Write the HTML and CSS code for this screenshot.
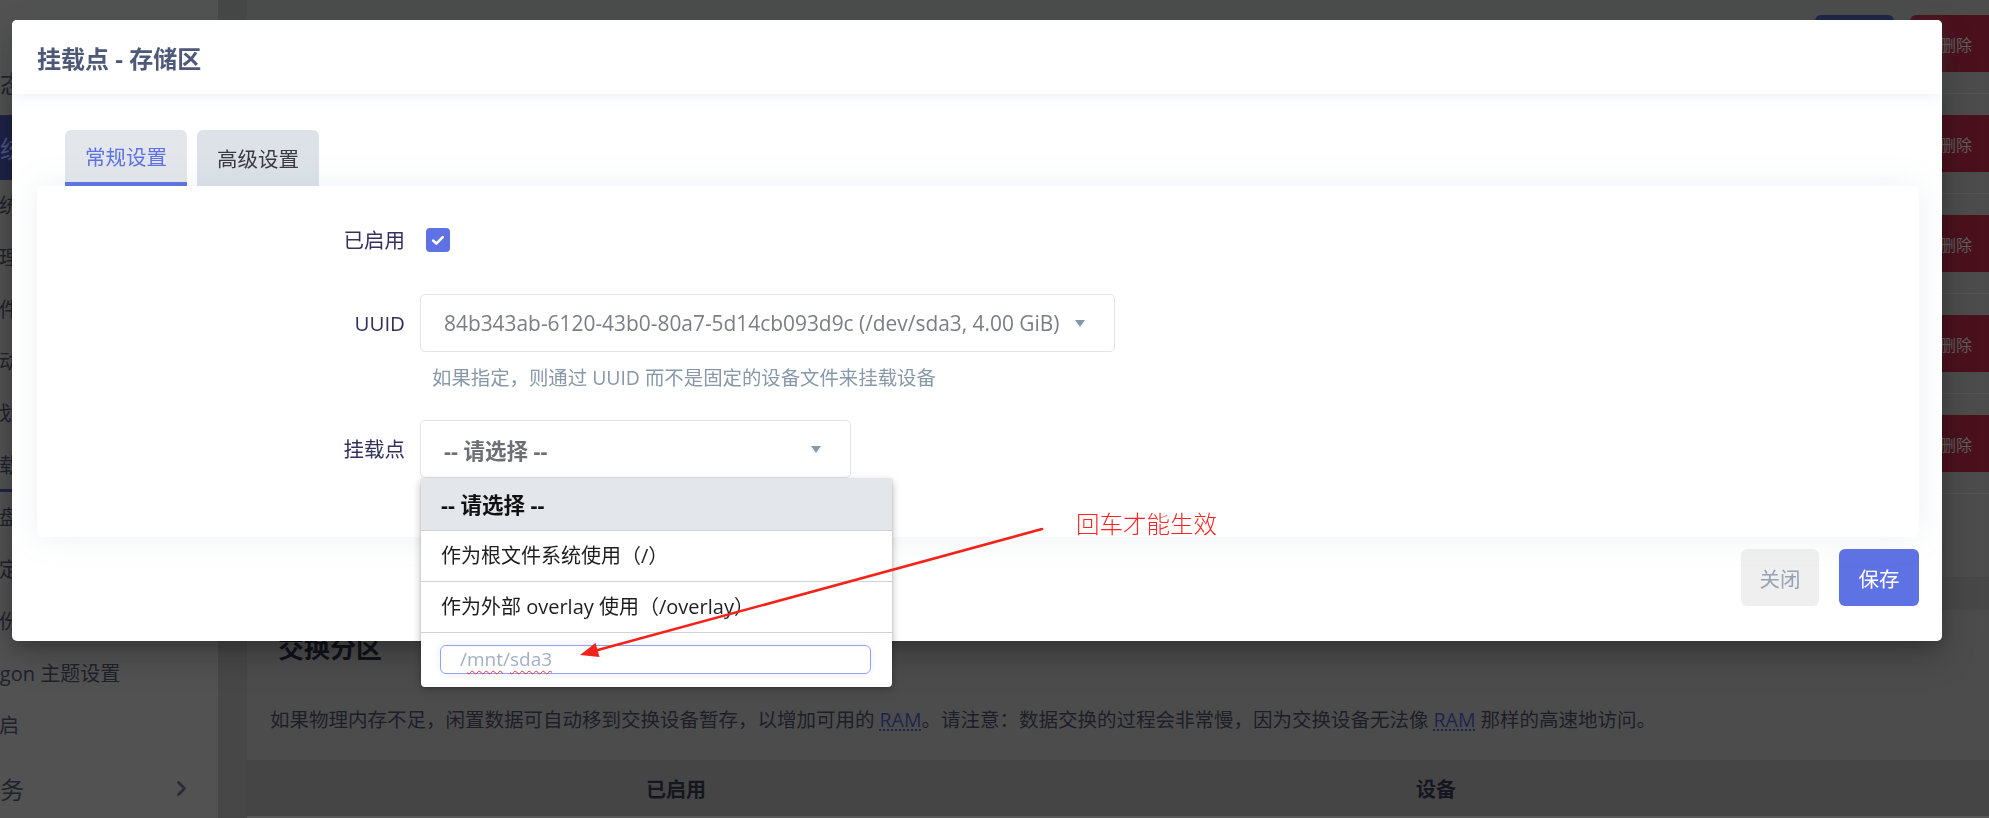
FILE: index.html
```html
<!DOCTYPE html>
<html lang="zh-CN">
<head>
<meta charset="utf-8">
<title>挂载点 - 存储区</title>
<link rel="stylesheet" href="styles.css">
</head>
<body>
<div class="page">
  <aside class="sidebar">
    <div class="menu-top"><span class="mt-text">状态</span></div>
    <div class="menu-top active"><span class="mt-text">系统</span></div>
    <ul class="submenu">
      <li>系统</li>
      <li>管理权</li>
      <li>软件包</li>
      <li>启动项</li>
      <li>计划任务</li>
      <li class="current">挂载点</li>
      <li>磁盘管理</li>
      <li>自定义命令</li>
      <li>备份/升级</li>
      <li>Argon 主题设置</li>
      <li>重启</li>
    </ul>
    <div class="menu-top has-sub"><span class="mt-text">服务</span>
      <svg class="chev" width="9" height="15" viewBox="0 0 9 15"><path d="M1.5 1.5l6 6-6 6" fill="none" stroke="#2a2b30" stroke-width="2.6" stroke-linecap="round" stroke-linejoin="round"/></svg>
    </div>
  </aside>
  <main class="main">
    <section class="bg-card table-card">
      <div class="trow"><span class="bg-btn edit">修改</span><span class="bg-btn del">删除</span></div>
      <div class="trow"><span class="bg-btn edit">修改</span><span class="bg-btn del">删除</span></div>
      <div class="trow"><span class="bg-btn edit">修改</span><span class="bg-btn del">删除</span></div>
      <div class="trow"><span class="bg-btn edit">修改</span><span class="bg-btn del">删除</span></div>
      <div class="trow"><span class="bg-btn edit">修改</span><span class="bg-btn del">删除</span></div>
    </section>
    <section class="bg-card swap-card">
      <h3 class="swap-title">交换分区</h3>
      <p class="swap-desc">如果物理内存不足，闲置数据可自动移到交换设备暂存，以增加可用的 <abbr>RAM</abbr>。请注意：数据交换的过程会非常慢，因为交换设备无法像 <abbr>RAM</abbr> 那样的高速地访问。</p>
      <div class="thead"><span>已启用</span><span>设备</span></div>
    </section>
  </main>
</div>

<div class="modal">
  <div class="modal-header"><h4 class="modal-title">挂载点 - 存储区</h4></div>
  <div class="modal-body">
    <ul class="tabs">
      <li class="tab active">常规设置</li>
      <li class="tab">高级设置</li>
    </ul>
    <div class="form-card">
      <div class="row row-enabled">
        <label class="row-label">已启用</label>
        <div class="row-field">
          <span class="checkbox"><svg width="24" height="24" viewBox="0 0 24 24"><path d="M7.2 12.6l3.1 3.1 6.4-6.6" fill="none" stroke="#fff" stroke-width="2.6" stroke-linecap="round" stroke-linejoin="round"/></svg></span>
        </div>
      </div>
      <div class="row row-uuid">
        <label class="row-label tall">UUID</label>
        <div class="row-field">
          <div class="select select-uuid"><span class="sel-text">84b343ab-6120-43b0-80a7-5d14cb093d9c (/dev/sda3, 4.00 GiB)</span><i class="caret"></i></div>
          <div class="help">如果指定，则通过 UUID 而不是固定的设备文件来挂载设备</div>
        </div>
      </div>
      <div class="row row-mount">
        <label class="row-label tall">挂载点</label>
        <div class="row-field">
          <div class="select-wrap">
            <div class="select select-mount"><span class="sel-text ph">-- 请选择 --</span><i class="caret"></i></div>
            <div class="dropdown">
              <div class="opt selected">-- 请选择 --</div>
              <div class="opt">作为根文件系统使用（/）</div>
              <div class="opt">作为外部 overlay 使用（/overlay）</div>
              <div class="opt-input"><div class="fake-input">/<span class="sp">mnt</span>/<span class="sp">sda3</span></div></div>
            </div>
          </div>
        </div>
      </div>
    </div>
  </div>
  <div class="modal-footer">
    <button class="btn btn-close">关闭</button>
    <button class="btn btn-save">保存</button>
  </div>
</div>

<div class="note">回车才能生效</div>
<svg class="arrow" width="1989" height="818" viewBox="0 0 1989 818">
  <line x1="1042" y1="529" x2="596" y2="650.5" stroke="#f4231a" stroke-width="2.6" stroke-linecap="round"/>
  <polygon points="580,655 599.5,657 595.5,643" fill="#f4231a"/>
</svg>
</body>
</html>
```

FILE: styles.css
```css
* { box-sizing: border-box; }
html, body { margin: 0; padding: 0; }
body {
  width: 1989px;
  height: 818px;
  overflow: hidden;
  position: relative;
  background: #474747;
  font-family: "Open Sans", "Noto Sans CJK SC", sans-serif;
}

/* ---------- dimmed background page ---------- */
.page { display: flex; height: 818px; overflow: hidden; }

.sidebar {
  width: 218px;
  flex-shrink: 0;
  background: #525252;
  padding-top: 50px;
  overflow: hidden;
  color: #1f222b;
}
.menu-top {
  height: 65px;
  display: flex;
  align-items: center;
  font-size: 24px;
  white-space: nowrap;
}
.mt-text { margin-left: -24px; }
.menu-top.active { background: #1d2347; color: #4b5280; }
.menu-top.has-sub { height: 72px; justify-content: space-between; padding-right: 32px; }
.chev { display: block; }

.submenu { list-style: none; margin: 0; padding: 0; }
.submenu li {
  height: 52px;
  line-height: 52px;
  font-size: 20px;
  text-indent: -21px;
  white-space: nowrap;
}
.submenu li.current { box-shadow: inset 0 -3px 0 #1d2347; }

.main { flex: 1; min-width: 0; padding-left: 29px; }
.bg-card { background: #4c4c4c; width: 1790px; }
.table-card { margin-top: -6px; height: 583px; padding-right: 35px; }
.trow {
  height: 100px;
  border-bottom: 1px solid #545454;
  display: flex;
  align-items: center;
  justify-content: flex-end;
  gap: 16px;
}
.bg-btn {
  height: 57px;
  border-radius: 6px;
  display: flex;
  align-items: center;
  justify-content: center;
  font-size: 16px;
  color: #5f5f5f;
}
.bg-btn.edit { width: 79px; background: #1c2244; }
.bg-btn.del { width: 92px; background: #4a111d; }

.swap-card { margin-top: 33px; height: 208px; padding: 20px 0 0 23px; overflow: hidden; }
.swap-title {
  margin: 0 0 0 8px;
  font-size: 26px;
  line-height: 36px;
  font-weight: 700;
  color: #111219;
}
.swap-desc {
  margin: 39px 0 0;
  font-size: 19.5px;
  line-height: 30px;
  color: #1d1e28;
  white-space: nowrap;
}
.swap-desc abbr {
  color: #1d2450;
  text-decoration: underline dotted;
  text-underline-offset: 3px;
}
.thead {
  margin: 25px 0 0 -23px;
  height: 58px;
  background: #454545;
  border-bottom: 2px solid #585858;
  display: grid;
  grid-template-columns: 760px 760px;
  padding-left: 49px;
  align-items: center;
  text-align: center;
  font-size: 20px;
  font-weight: 700;
  color: #15161f;
}

/* ---------- modal ---------- */
.modal {
  position: fixed;
  left: 12px;
  top: 20px;
  width: 1930px;
  background: #fff;
  border-radius: 5px;
  box-shadow: 0 15px 35px rgba(0, 0, 0, 0.22), 0 5px 15px rgba(0, 0, 0, 0.17);
  z-index: 10;
}
.modal-header {
  position: relative;
  z-index: 2;
  height: 74px;
  display: flex;
  align-items: center;
  padding-left: 25px;
  background: #fff;
  border-radius: 5px 5px 0 0;
  box-shadow: 0 2px 14px rgba(136, 152, 170, 0.16);
}
.modal-title {
  margin: 0;
  font-size: 24px;
  font-weight: 700;
  color: #4e5877;
}
.modal-body { padding: 36px 23px 0 25px; }

.tabs {
  list-style: none;
  margin: 0 0 0 28px;
  padding: 0;
  display: flex;
  gap: 10px;
}
.tab {
  height: 56px;
  padding: 0 20px;
  min-width: 122px;
  display: flex;
  align-items: center;
  justify-content: center;
  font-size: 20.5px;
  color: #3a3a3f;
  background: #dce2e8;
  border-radius: 6px 6px 0 0;
}
.tab.active {
  color: #5e72e4;
  background: #e3e7ec;
  border-bottom: 4px solid #5e72e4;
}

.form-card {
  position: relative;
  z-index: 1;
  height: 351px;
  background: #fff;
  border-radius: 6px;
  box-shadow: 0 0 32px rgba(136, 152, 170, 0.15);
  padding-top: 42px;
}
.row { display: flex; align-items: flex-start; }
.row-label {
  width: 383px;
  flex-shrink: 0;
  padding-right: 15px;
  text-align: right;
  font-size: 20.5px;
  line-height: 24px;
  color: #32325d;
}
.row-label.tall { line-height: 58px; }
.row-uuid { margin-top: 42px; }
.row-mount { margin-top: 28px; }

.checkbox {
  display: block;
  width: 24px;
  height: 24px;
  margin-left: 6px;
  border-radius: 4px;
  background: #5e72e4;
}
.checkbox svg { display: block; }

.select {
  height: 58px;
  border: 1px solid #e0e3e8;
  border-radius: 5px;
  display: flex;
  align-items: center;
  padding: 0 29px 0 23px;
  background: #fff;
}
.select-uuid { width: 695px; }
.select-mount { width: 431px; }
.sel-text {
  font-size: 20.9px;
  color: #7b7e86;
  white-space: nowrap;
}
.sel-text.ph { font-weight: 700; font-size: 21.5px; color: #6c6f74; }
.caret {
  margin-left: auto;
  width: 0;
  height: 0;
  border-left: 5px solid transparent;
  border-right: 5px solid transparent;
  border-top: 7px solid #8898aa;
}
.help {
  margin: 12px 0 0 12px;
  font-size: 19.4px;
  line-height: 28px;
  color: #8898aa;
}

.select-wrap { position: relative; width: 431px; }
.dropdown {
  position: absolute;
  top: calc(100% + 1px);
  left: 1px;
  width: 471px;
  background: #fff;
  border-radius: 0 0 4px 4px;
  box-shadow: 0 3px 8px rgba(0, 0, 0, 0.28), 0 0 2px rgba(0, 0, 0, 0.2);
  z-index: 5;
}
.opt {
  height: 51px;
  line-height: 50px;
  padding-left: 20px;
  font-size: 20px;
  color: #1e1e1e;
  border-bottom: 1px solid #d2d2d2;
  white-space: nowrap;
}
.opt.selected {
  height: 52px;
  line-height: 51px;
  background: #e3e7ec;
  font-weight: 700;
  font-size: 21.5px;
  color: #111;
}
.opt-input { padding: 12px 21px 13px 19px; }
.fake-input {
  height: 29px;
  border: 1px solid #93a1f0;
  border-radius: 6px;
  padding-left: 19px;
  font-size: 19px;
  line-height: 26px;
  color: #a3afc2;
  box-shadow: 0 0 6px rgba(94, 114, 228, 0.12);
}
.sp {
  text-decoration: underline wavy #f0302e;
  text-decoration-thickness: 1px;
  text-underline-offset: 4px;
}

.modal-footer {
  display: flex;
  justify-content: flex-end;
  gap: 20px;
  padding: 12px 23px 35px;
}
.btn {
  height: 57px;
  border: none;
  border-radius: 6px;
  font-family: inherit;
  font-size: 20.5px;
  padding: 0;
}
.btn-close { width: 78px; background: #efefef; color: #97a3b1; }
.btn-save { width: 80px; background: #5e72e4; color: #fff; }

/* ---------- annotation ---------- */
.note {
  position: absolute;
  left: 1076px;
  top: 508px;
  z-index: 20;
  font-family: "Noto Sans CJK SC", sans-serif;
  font-weight: 300;
  font-size: 23.5px;
  line-height: 30px;
  color: #ff2323;
}
.arrow {
  position: absolute;
  left: 0;
  top: 0;
  z-index: 20;
  pointer-events: none;
}
```
